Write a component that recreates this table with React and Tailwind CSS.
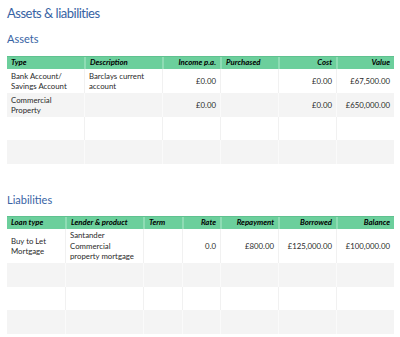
import React from 'react'

const assetCols = [
  { label: 'Type', w: 'w-[77px]', align: 'left' },
  { label: 'Description', w: 'w-[78px]', align: 'left' },
  { label: 'Income p.a.', w: 'w-[58px]', align: 'right' },
  { label: 'Purchased', w: 'w-[58px]', align: 'left' },
  { label: 'Cost', w: 'w-[58px]', align: 'right' },
  { label: 'Value', w: 'w-[58px]', align: 'right' },
]

const assetRows = [
  { h: 'h-[24px]', cells: ['Bank Account/\nSavings Account', 'Barclays current\naccount', '£0.00', '', '£0.00', '£67,500.00'] },
  { h: 'h-[24px]', cells: ['Commercial\nProperty', '', '£0.00', '', '£0.00', '£650,000.00'] },
  { h: 'h-[23px]', cells: ['', '', '', '', '', ''] },
  { h: 'h-[24px]', cells: ['', '', '', '', '', ''] },
]

const liabCols = [
  { label: 'Loan type', w: 'w-[58px]', align: 'left' },
  { label: 'Lender & product', w: 'w-[78px]', align: 'left' },
  { label: 'Term', w: 'w-[39px]', align: 'left' },
  { label: 'Rate', w: 'w-[38px]', align: 'right' },
  { label: 'Repayment', w: 'w-[58px]', align: 'right' },
  { label: 'Borrowed', w: 'w-[58px]', align: 'right' },
  { label: 'Balance', w: 'w-[58px]', align: 'right' },
]

const liabRows = [
  { h: 'h-[34px]', cells: ['Buy to Let\nMortgage', 'Santander\nCommercial\nproperty mortgage', '', '0.0', '£800.00', '£125,000.00', '£100,000.00'] },
  { h: 'h-[24px]', cells: ['', '', '', '', '', '', ''] },
  { h: 'h-[23px]', cells: ['', '', '', '', '', '', ''] },
  { h: 'h-[24px]', cells: ['', '', '', '', '', '', ''] },
]

function Table({ cols, rows }){
  return (
    <div className="w-[387px]">
      <div className="flex h-[13px] bg-[#6ccf9c] border-t border-[#5fc28f]">
        {cols.map((c, i) => (
          <div key={i} className={`${c.w} shrink-0 flex items-center px-[4px] text-[7.8px] font-bold italic text-black leading-none whitespace-pre ${c.align === 'right' ? 'justify-end' : ''} ${i > 0 ? 'border-l-2 border-[#8fdcb4]' : ''}`}>
            {c.label}
          </div>
        ))}
      </div>
      {rows.map((r, ri) => (
        <div key={ri} className={`flex ${r.h} ${ri % 2 === 1 ? 'bg-[#f4f4f4]' : 'bg-white'}`}>
          {r.cells.map((v, ci) => (
            <div key={ci} className={`${cols[ci].w} shrink-0 flex items-center px-[4px] text-[7.8px] leading-[10.5px] text-[#2a2a2a] whitespace-pre ${cols[ci].align === 'right' ? 'justify-end text-right' : ''} ${ci > 0 ? (ri % 2 === 1 ? 'border-l border-[#fafafa]' : 'border-l border-[#f1f1f1]') : ''}`}>
              {v}
            </div>
          ))}
        </div>
      ))}
    </div>
  )
}

export default function App(){
  return (
    <div className="w-[400px] h-[337px] bg-white pl-[7px] font-['Lato','Liberation_Sans',sans-serif]">
      <div className="h-[28px] pt-[4px] text-[13px] leading-[19px] tracking-[-0.5px] text-[#3863a4]">Assets &amp; liabilities</div>
      <div className="h-[28px] pt-[3px] text-[11px] leading-[16px] text-[#3863a4]">Assets</div>
      <Table cols={assetCols} rows={assetRows} />
      <div className="h-[52px] pt-[28px] text-[11px] leading-[16px] text-[#3863a4]">Liabilities</div>
      <Table cols={liabCols} rows={liabRows} />
    </div>
  )
}
